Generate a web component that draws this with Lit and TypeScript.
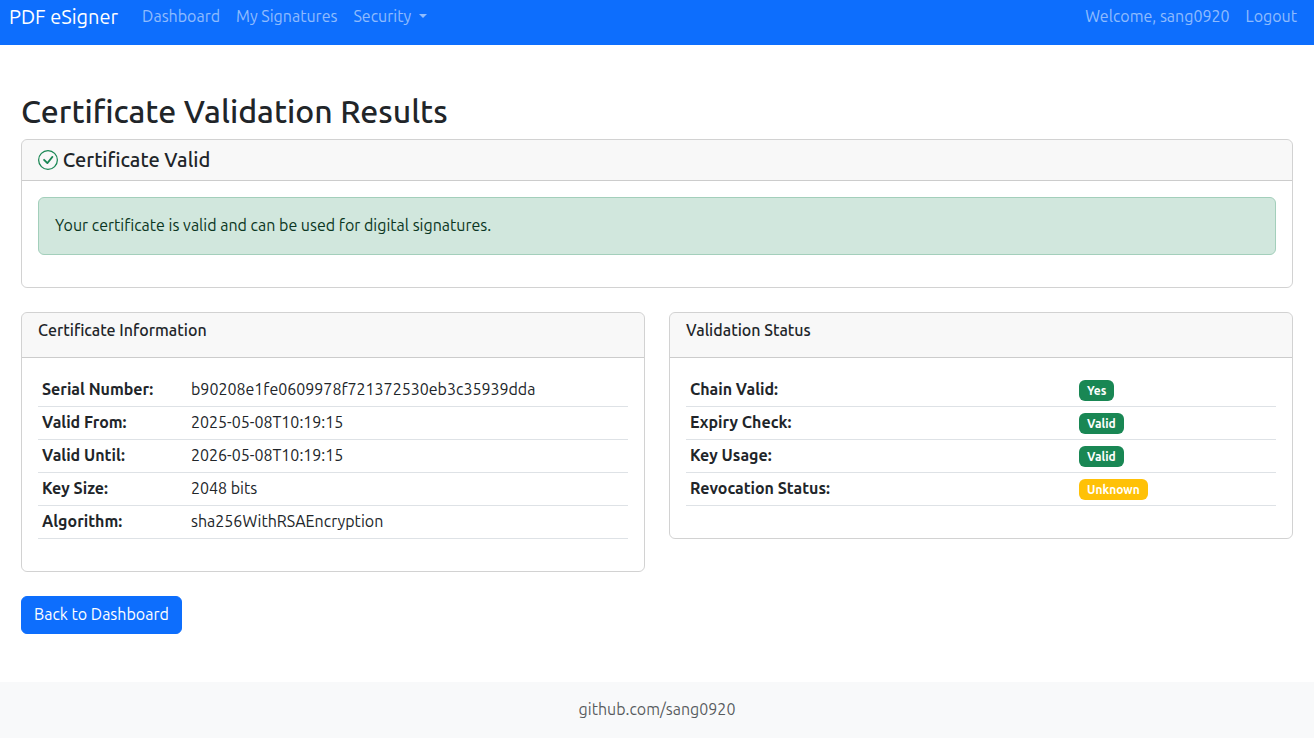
import { LitElement, html, css } from "lit";
import { customElement } from "lit/decorators.js";

const certificateInfo = [
  { label: "Serial Number:", value: "b90208e1fe0609978f721372530eb3c35939dda" },
  { label: "Valid From:", value: "2025-05-08T10:19:15" },
  { label: "Valid Until:", value: "2026-05-08T10:19:15" },
  { label: "Key Size:", value: "2048 bits" },
  { label: "Algorithm:", value: "sha256WithRSAEncryption" },
];

const validationStatus = [
  { label: "Chain Valid:", value: "Yes", tone: "success" },
  { label: "Expiry Check:", value: "Valid", tone: "success" },
  { label: "Key Usage:", value: "Valid", tone: "success" },
  { label: "Revocation Status:", value: "Unknown", tone: "warning" },
];

@customElement("app-root")
export class AppRoot extends LitElement {
  static styles = css`
    :host {
      display: block;
      min-height: 100vh;
      background: #fff;
      color: #212529;
      font: 400 16px/1.5 Ubuntu, "Open Sans", "Noto Sans", sans-serif;
    }
    * {
      box-sizing: border-box;
    }
    h2,
    h5,
    h6,
    ul {
      margin: 0;
      padding: 0;
    }
    a {
      color: inherit;
      text-decoration: none;
    }
    .navbar {
      display: flex;
      align-items: flex-start;
      height: 45px;
      padding: 2px 9px 0;
      background: #0d6efd;
      color: rgba(255, 255, 255, 0.55);
    }
    .brand {
      margin-right: 16px;
      color: #fff;
      font-size: 20px;
      line-height: 30px;
    }
    .nav {
      display: flex;
      padding-top: 2px;
      list-style: none;
    }
    .nav li {
      padding: 0 8px;
    }
    .nav-end {
      margin-left: auto;
    }
    .dropdown::after {
      content: "";
      display: inline-block;
      margin-left: 4px;
      vertical-align: 4px;
      border-top: 4.8px solid;
      border-right: 4.8px solid transparent;
      border-left: 4.8px solid transparent;
    }
    .content {
      padding: 47px 21px 48px;
    }
    h2 {
      margin-bottom: 9px;
      font-size: 32px;
      font-weight: 500;
      line-height: 1.2;
    }
    .card {
      margin-bottom: 24px;
      border: 1px solid rgba(0, 0, 0, 0.175);
      border-radius: 6px;
    }
    .card-header {
      padding: 8px 16px;
      background: rgba(33, 37, 41, 0.03);
      border-bottom: 1px solid rgba(0, 0, 0, 0.175);
      border-radius: 5px 5px 0 0;
    }
    .card-body {
      padding: 16px;
    }
    h5 {
      font-size: 20px;
      font-weight: 500;
      line-height: 1.2;
    }
    h6 {
      margin-bottom: 8px;
      font-size: 16px;
      font-weight: 500;
      line-height: 1.2;
    }
    .check {
      width: 20px;
      height: 20px;
      vertical-align: -2.5px;
      fill: #198754;
    }
    .alert {
      margin-bottom: 16px;
      padding: 15px 16px 17px;
      border: 1px solid #a3cfbb;
      border-radius: 6px;
      background: #d1e7dd;
      color: #0a3622;
    }
    .columns {
      display: grid;
      grid-template-columns: 1fr 1fr;
      gap: 24px;
      align-items: start;
    }
    table {
      width: 100%;
      margin-bottom: 16px;
      border-collapse: collapse;
      table-layout: fixed;
    }
    td {
      padding: 3px 4px 5px;
      border-bottom: 1px solid #dee2e6;
      vertical-align: top;
    }
    .label {
      font-weight: 700;
    }
    .info .label {
      width: 149px;
    }
    .status .label {
      width: 389px;
    }
    .badge {
      display: inline-block;
      margin: -2px 0;
      padding: 4.5px 8px;
      border-radius: 6px;
      color: #fff;
      font-size: 12px;
      font-weight: 700;
      line-height: 1;
      vertical-align: baseline;
    }
    .success {
      background: #198754;
    }
    .warning {
      background: #ffc107;
    }
    .button {
      display: block;
      width: fit-content;
      padding: 5px 12px 7px;
      border: 1px solid #0d6efd;
      border-radius: 6px;
      background: #0d6efd;
      color: #fff;
    }
    .footer {
      padding: 15px 16px 17px;
      background: #f8f9fa;
      color: rgba(33, 37, 41, 0.75);
      text-align: center;
    }
  `;

  render() {
    return html`
      <nav class="navbar">
        <a class="brand" href="#">PDF eSigner</a>
        <ul class="nav">
          <li><a href="#">Dashboard</a></li>
          <li><a href="#">My Signatures</a></li>
          <li><a class="dropdown" href="#">Security </a></li>
        </ul>
        <ul class="nav nav-end">
          <li>Welcome, sang0920</li>
          <li><a href="#">Logout</a></li>
        </ul>
      </nav>
      <main class="content">
        <h2>Certificate Validation Results</h2>
        <section class="card">
          <div class="card-header">
            <h5>
              <svg class="check" viewBox="0 0 16 16" aria-hidden="true">
                <path d="M8 15A7 7 0 1 1 8 1a7 7 0 0 1 0 14m0 1A8 8 0 1 0 8 0a8 8 0 0 0 0 16" />
                <path
                  d="m10.97 4.97-.02.022-3.473 4.425-2.093-2.094a.75.75 0 0 0-1.06 1.06L6.97 11.03a.75.75 0 0 0 1.079-.02l3.992-4.99a.75.75 0 0 0-1.071-1.05"
                />
              </svg>
              Certificate Valid
            </h5>
          </div>
          <div class="card-body">
            <div class="alert">Your certificate is valid and can be used for digital signatures.</div>
          </div>
        </section>
        <div class="columns">
          <section class="card">
            <div class="card-header"><h6>Certificate Information</h6></div>
            <div class="card-body">
              <table class="info">
                ${certificateInfo.map(
                  (row) => html`<tr><td class="label">${row.label}</td><td>${row.value}</td></tr>`
                )}
              </table>
            </div>
          </section>
          <section class="card">
            <div class="card-header"><h6>Validation Status</h6></div>
            <div class="card-body">
              <table class="status">
                ${validationStatus.map(
                  (row) => html`<tr>
                    <td class="label">${row.label}</td>
                    <td><span class="badge ${row.tone}">${row.value}</span></td>
                  </tr>`
                )}
              </table>
            </div>
          </section>
        </div>
        <a class="button" href="#">Back to Dashboard</a>
      </main>
      <footer class="footer">github.com/sang0920</footer>
    `;
  }
}
